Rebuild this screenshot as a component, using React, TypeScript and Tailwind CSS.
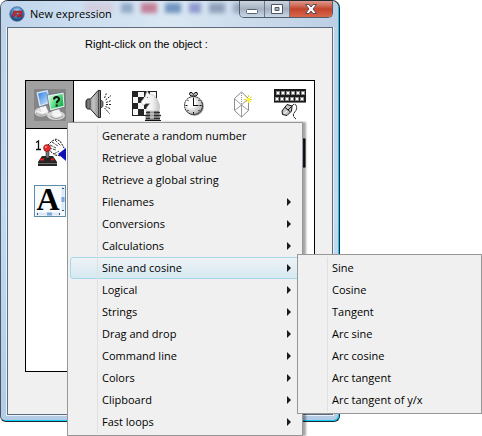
import type { ReactNode } from 'react';
import clsx from 'clsx';

interface MenuEntry {
  label: string;
  hasChildren?: boolean;
  children?: MenuEntry[];
}

const menu: MenuEntry[] = [
  { label: 'Generate a random number' },
  { label: 'Retrieve a global value' },
  { label: 'Retrieve a global string' },
  { label: 'Filenames', hasChildren: true },
  { label: 'Conversions', hasChildren: true },
  { label: 'Calculations', hasChildren: true },
  {
    label: 'Sine and cosine',
    hasChildren: true,
    children: [
      { label: 'Sine' },
      { label: 'Cosine' },
      { label: 'Tangent' },
      { label: 'Arc sine' },
      { label: 'Arc cosine' },
      { label: 'Arc tangent' },
      { label: 'Arc tangent of y/x' },
    ],
  },
  { label: 'Logical', hasChildren: true },
  { label: 'Strings', hasChildren: true },
  { label: 'Drag and drop', hasChildren: true },
  { label: 'Command line', hasChildren: true },
  { label: 'Colors', hasChildren: true },
  { label: 'Clipboard', hasChildren: true },
  { label: 'Fast loops', hasChildren: true },
];

function AppIcon() {
  return (
    <svg width="16" height="16" viewBox="0 0 16 16">
      <defs>
        <radialGradient id="ball" cx="0.5" cy="0.3" r="0.7">
          <stop offset="0" stopColor="#b9d6f0" />
          <stop offset="0.5" stopColor="#4a86c2" />
          <stop offset="1" stopColor="#123a6b" />
        </radialGradient>
      </defs>
      <circle cx="8" cy="8" r="7.3" fill="url(#ball)" stroke="#4b6f98" strokeWidth="0.7" />
      <path d="M3 11 4.6 5H9L8.5 6.7H6.2L6 7.7H8L7.5 9.2H5.5L5 11Z" fill="#d4262a" stroke="#5a1622" strokeWidth="0.4" />
      <path d="M9 5H13.4L13 8.3 10.8 9.3H13.2L12.6 11H8L8.5 8.8 11 7.2V6.5H9Z" fill="#d4262a" stroke="#5a1622" strokeWidth="0.4" />
    </svg>
  );
}

function SystemIcon() {
  return (
    <svg width="32" height="32" viewBox="0 0 32 32">
      <defs>
        <linearGradient id="blueScreen" x1="0" y1="0" x2="1" y2="1">
          <stop offset="0" stopColor="#2d7be0" />
          <stop offset="1" stopColor="#d6ecff" />
        </linearGradient>
        <linearGradient id="greenScreen" x1="0" y1="0" x2="1" y2="0.6">
          <stop offset="0" stopColor="#e4ffec" />
          <stop offset="0.5" stopColor="#67e38c" />
          <stop offset="1" stopColor="#18b14c" />
        </linearGradient>
      </defs>
      <rect width="32" height="32" fill="#858585" />
      <ellipse cx="7.5" cy="23" rx="7" ry="4.5" fill="#dadada" />
      <path d="M6 18 12 17 14 23 8 25Z" fill="#f4f4f4" />
      <path d="M2 3 14 0.5 17 14 5 18Z" fill="#dfe7ef" stroke="#586b80" strokeWidth="0.6" />
      <path d="M4 4.5 13 2.5 15.5 13 6.5 16Z" fill="url(#blueScreen)" />
      <ellipse cx="22" cy="26.5" rx="9" ry="4.5" fill="#d6d6d6" />
      <path d="M18 22 25 20 28 27 20 29Z" fill="#f2f2f2" />
      <path d="M13 6 30 3 31 18 16 22Z" fill="#e6eef0" stroke="#3d5260" strokeWidth="0.6" />
      <path d="M14.8 7.5 28.5 5 29.5 16.7 17 20Z" fill="url(#greenScreen)" />
      <path d="M20 10.5c0-3 5-3.5 5-.3 0 2-2.3 1.8-2.3 4" fill="none" stroke="#111" strokeWidth="2" />
      <rect x="21.7" y="15.5" width="2" height="2" fill="#111" />
      <path d="M2 24q5 4 10 1M16 27q6 5 13 0" fill="none" stroke="#9c9c9c" />
      <path d="M3 22q4 3 8 1M18 25q4 3 9 0" fill="none" stroke="#fff" />
    </svg>
  );
}

function SpeakerIcon() {
  return (
    <svg width="32" height="32" viewBox="0 0 32 32">
      <defs>
        <linearGradient id="cone" x1="0" x2="1">
          <stop offset="0" stopColor="#5a5a5a" />
          <stop offset="0.5" stopColor="#c4c4c4" />
          <stop offset="1" stopColor="#808080" />
        </linearGradient>
      </defs>
      <path d="M5.5 10H8.5L16 1.5H18.5V28.5H16L8.5 20H5.5L4 18V12Z" fill="url(#cone)" stroke="#222" />
      <path d="M16.5 2V28M8 10.5V19.5" stroke="#444" fill="none" />
      <path d="M18.5 11.5H20L21 13V17L20 18.5H18.5Z" fill="#777" stroke="#222" strokeWidth="0.7" />
      <path
        d="M22.5 9 24.5 4M23.5 11 29 6.5M24 13.5 29.5 11.5M24 15.5H30M23.5 17.5 29 20M22.5 19 27.5 24.5"
        stroke="#222"
        strokeDasharray="2 1"
      />
    </svg>
  );
}

const boardCells = Array.from({ length: 16 }, (_, n) => ({
  x: (n % 4) * 6,
  y: 2 + Math.floor(n / 4) * 6,
  dark: ((n % 4) + Math.floor(n / 4)) % 2 === 0,
}));

function StoryboardIcon() {
  return (
    <svg width="32" height="32" viewBox="0 0 32 32">
      <defs>
        <linearGradient id="horse" x1="0" x2="1">
          <stop offset="0" stopColor="#fff" />
          <stop offset="0.6" stopColor="#f2f2f2" />
          <stop offset="1" stopColor="#c4c4c4" />
        </linearGradient>
      </defs>
      <rect x="2.5" y="2.5" width="24" height="24" fill="#f6f6f6" stroke="#222" />
      <g transform="translate(2 0)">
        {boardCells.map(({ x, y, dark }) => (
          <rect key={`${x}-${y}`} x={x} y={y} width="6" height="6" fill={dark ? '#252525' : '#f6f6f6'} />
        ))}
      </g>
      <rect x="2.5" y="2.5" width="24" height="24" fill="none" stroke="#222" />
      <path
        d="M11 13 15 8 16 5 17 2 19 5Q24 5 27 10Q31 16 29 22H16Q16 18 20 14.5L16 14.5 13 16.5Z"
        fill="url(#horse)"
        stroke="#bdbdbd"
        strokeWidth="0.6"
      />
      <rect x="17" y="8" width="1" height="1" fill="#777" />
      <path d="M17 22H29L30 31H15Z" fill="#999" />
      <path d="M16 23.5H30M15 26.5H31M16 29.5H30" stroke="#2a2a2a" strokeWidth="1.6" />
      <path d="M20 22H24V30H20Z" fill="#e4e4e4" opacity="0.6" />
      <path d="M15 31.5H31" stroke="#111" />
    </svg>
  );
}

function TimerIcon() {
  return (
    <svg width="32" height="32" viewBox="0 0 32 32">
      <defs>
        <radialGradient id="dial" cx="0.35" cy="0.35" r="0.75">
          <stop offset="0.3" stopColor="#fff" />
          <stop offset="1" stopColor="#a2a2a2" />
        </radialGradient>
      </defs>
      <circle cx="16.5" cy="17.5" r="9.3" fill="#888" />
      <circle cx="15.5" cy="16.5" r="9" fill="url(#dial)" stroke="#222" strokeDasharray="2 0.5" />
      <path d="M13 7 11.5 5.5 12 3.5H14L15.5 5.5 17 3.5H19L19.5 5.5 18 7Z" fill="#bbb" stroke="#111" />
      <path d="M15.5 10V17M15.5 16.5H20.5" fill="none" stroke="#111" />
      <path d="M15.5 8.5V10M15.5 23V25M7.5 16.5H9.5M21.5 16.5H23.5M9.5 11 10.5 12M21.5 11 20.5 12M9.5 22 10.5 21M21.5 22 20.5 21" stroke="#111" />
    </svg>
  );
}

function CreateIcon() {
  return (
    <svg width="32" height="32" viewBox="0 0 32 32">
      <path d="M15.5 3 8.5 9.5V21.5L15.5 28 22.5 21.5V9.5Z" fill="#fff" stroke="#8c8c8c" />
      <path d="M8.5 9.5 15.5 16 22.5 9.5M15.5 16V28M8.5 21.5 15.5 16 22.5 21.5" fill="none" stroke="#9a9a9a" />
      <path d="M15.5 4V16" stroke="#999" strokeDasharray="1 1" />
      <path d="M22.5 6V15M18 10.5H27M19.5 7.5 25.5 13.5M25.5 7.5 19.5 13.5" stroke="#e3da18" strokeDasharray="2 1" />
      <rect x="21" y="9" width="3" height="3" fill="#fdf52e" />
    </svg>
  );
}

function KeyboardMouseIcon() {
  const keys = [2, 7, 12, 17, 22, 27];
  return (
    <svg width="32" height="32" viewBox="0 0 32 32">
      <rect width="32" height="14" fill="#1b1b1b" />
      <path d="M0 13.5H32" stroke="#777" />
      {keys.map((x) => (
        <g key={x} shapeRendering="crispEdges">
          <rect x={x} y="2" width="4" height="4" fill="#8d8d8d" />
          <rect x={x + 1} y="3" width="2" height="2" fill="#fff" />
          <rect x={x - 1} y="8" width="4" height="4" fill="#8d8d8d" />
          <rect x={x} y="9" width="2" height="2" fill="#fff" />
        </g>
      ))}
      <path d="M18 17Q20 14 22 16Q24 20 20 24Q18 27 22 30" fill="none" stroke="#222" strokeDasharray="3 0.5" />
      <path d="M8 22 13 15.5 18 17 17.5 22 13 26.5 8.5 25.5Z" fill="#c4c4c4" stroke="#111" />
      <path d="M11 18.5 16.5 23M14 21 17.5 17.5" stroke="#111" />
      <path d="M10 24.5 13 22" stroke="#fff" />
    </svg>
  );
}

function JoystickIcon() {
  return (
    <svg width="32" height="32" viewBox="0 0 32 32">
      <path d="M2 5.5 4.5 4V13M2 12.5H7" fill="none" stroke="#111" strokeWidth="1.3" />
      <path d="M4 25 8 19H19L23 25V29H4Z" fill="#262626" />
      <path d="M4 26.5H23" stroke="#6d6d6d" />
      <path d="M6 22.5H10M17 22.5H20" stroke="#e02020" strokeWidth="2" />
      <path d="M12 11H15V21H12Z" fill="#777" stroke="#111" strokeWidth="0.5" />
      <path d="M14 8 18 4 22 2 26 4 29 9 31 13 27 19 21 18 16 14Z" fill="#fff" stroke="#111" strokeDasharray="2 1" />
      <path d="M18 5 24 9M21 3 27 9M15 11 22 13M16 8 22 11M20 17 25 14" stroke="#444" strokeDasharray="3 1" />
      <circle cx="13" cy="11" r="3.5" fill="#e52a2a" stroke="#701010" strokeWidth="0.5" />
      <circle cx="12" cy="10" r="1" fill="#ff9c9c" />
      <path d="M32 11 24 17 32 24Z" fill="#1010b8" />
    </svg>
  );
}

function TextObjectIcon() {
  return (
    <span className="relative flex size-8 items-center justify-center border border-[#5d8ba8] bg-[#f7fbfd] font-['Liberation_Serif',serif] text-[32px] leading-8 font-bold">
      <svg className="absolute inset-0" width="30" height="30" viewBox="0 0 30 30">
        <path d="M28 1V25M1 28H25" stroke="#dbe8f6" strokeWidth="3" />
        <path d="M28 11V16M12 28H17" stroke="#7fa5dd" strokeWidth="3" />
        <path d="M27 3 28 2 29 3M27 24 28 25 29 24M3 27 2 28 3 29M24 27 25 28 24 29" fill="none" stroke="#36527e" />
      </svg>
      <span className="relative pr-1 pb-1">A</span>
    </span>
  );
}

function ScreenObjectIcon() {
  return (
    <svg width="32" height="32" viewBox="0 0 32 32">
      <rect x="1" y="2" width="30" height="28" fill="#1b2440" stroke="#000" />
    </svg>
  );
}

interface ObjectItem {
  name: string;
  icon: ReactNode;
}

const objects: (ObjectItem | null)[] = [
  { name: 'Special', icon: <SystemIcon /> },
  { name: 'Sound', icon: <SpeakerIcon /> },
  { name: 'Storyboard controls', icon: <StoryboardIcon /> },
  { name: 'Timer', icon: <TimerIcon /> },
  { name: 'Create new objects', icon: <CreateIcon /> },
  { name: 'Mouse and keyboard', icon: <KeyboardMouseIcon /> },
  { name: 'Player 1', icon: <JoystickIcon /> },
  null,
  null,
  null,
  null,
  { name: 'Screen', icon: <ScreenObjectIcon /> },
  { name: 'Text', icon: <TextObjectIcon /> },
];

function Menu({ items, className }: { items: MenuEntry[]; className?: string }) {
  return (
    <ul
      role="menu"
      className={clsx(
        'absolute border border-[#979797] bg-[#f0f0f0] p-0.5 font-["Open_Sans",sans-serif] text-[11px] text-black',
        className,
      )}
    >
      {items.map((item) => (
        <li key={item.label} role="none" className="relative">
          <button
            role="menuitem"
            className={clsx(
              'flex h-[22px] w-full items-center rounded-[3px] border pr-2',
              item.children
                ? 'border-[#a8d8eb] bg-linear-to-b from-[#edf3f6] to-[#d6e9f1]'
                : 'border-transparent',
            )}
          >
            <span className="mr-1 h-[22px] w-[27px] shrink-0 border-r border-[#e0e0e0]" />
            <span className="flex-1 text-left whitespace-nowrap">{item.label}</span>
            {item.hasChildren && (
              <svg width="4" height="8" viewBox="0 0 4 8" className="shrink-0">
                <path d="M0 0 4 4 0 8Z" fill="#1a1a1a" />
              </svg>
            )}
          </button>
          {item.children && (
            <Menu items={item.children} className="-top-[3px] left-[227px] z-20 w-[185px]" />
          )}
        </li>
      ))}
    </ul>
  );
}

function TitleBar() {
  return (
    <header className="relative flex h-[26px] items-start justify-between overflow-hidden rounded-t-md bg-linear-to-r from-[#bfd5ec] via-[#dae7f3] to-[#bccfe4] pl-2">
      {/* blurred desktop showing through the glass */}
      <div className="absolute inset-x-0 top-0.5 flex h-2.5 gap-2 pl-[84px] blur-[2px]">
        <span className="w-7 bg-[#d9a9b8]/30" />
        <span className="w-3 bg-[#54749c]/50" />
        <span className="w-4 bg-[#b5395a]/60" />
        <span className="w-4 bg-[#2c5f9c]/60" />
        <span className="w-3 bg-[#4a4fb0]/50" />
        <span className="w-4 bg-[#4e5f83]/50" />
        <span className="w-4 bg-[#4e5f83]/40" />
      </div>
      <h1 className="relative flex items-center gap-[5px] pt-1 font-['Open_Sans',sans-serif] text-[11px] leading-[18px]">
        <AppIcon />
        New expression
      </h1>
      <div className="relative mr-[5px] flex h-[17px] overflow-hidden rounded-b-[5px] border border-t-0 border-[#525d6b]">
        <button aria-label="Minimize" className="flex w-[25px] items-center justify-center border-r border-[#6d7787] bg-linear-to-b from-[#cbd5e1] via-[#a5b0bf] to-[#c9d8e8]">
          <svg width="12" height="12" viewBox="0 0 12 12">
            <rect x="0.5" y="6.5" width="11" height="4" rx="1" fill="#fff" stroke="#5a6373" />
          </svg>
        </button>
        <button aria-label="Maximize" className="flex w-[25px] items-center justify-center border-r border-[#6d7787] bg-linear-to-b from-[#cbd5e1] via-[#a5b0bf] to-[#c9d8e8]">
          <svg width="12" height="10" viewBox="0 0 12 10">
            <path d="M0.5 0.5H11.5V9.5H0.5ZM4 3.5V6.5H8V3.5Z" fill="#fff" stroke="#4f5869" fillRule="evenodd" />
          </svg>
        </button>
        <button aria-label="Close" className="flex w-[42px] items-center justify-center bg-linear-to-b from-[#dd9a8c] via-[#c3442c] to-[#d9664a]">
          <svg width="12" height="10" viewBox="0 0 12 10">
            <path d="M0.5 0.5H4L6 3 8 0.5H11.5L8 5 11.5 9.5H8L6 7 4 9.5H0.5L4 5Z" fill="#fff" stroke="#5b4a55" />
          </svg>
        </button>
      </div>
    </header>
  );
}

export default function App() {
  return (
    <main className="min-h-screen bg-white">
      <section className="w-full max-w-[340px] rounded-t-lg rounded-b-md border border-t-[#20262e] border-r-[#1b2a33] border-b-[#1b2a33] border-l-[#4a5664] bg-linear-to-b from-[#bdd0e6] via-[#c3daf3] to-[#b4cbe6] shadow-[inset_-1px_-1px_0_#08d0fa]">
        <div className="pr-px pb-px">
          <TitleBar />
          <div className="mr-[5px] mb-[5px] ml-1.5 border border-[#5d6b7c] bg-[#f0f0f0] px-[17px] pt-2 pb-[42px] outline outline-[#e6f1fb]">
            <p className="pl-[60px] font-['Liberation_Sans',sans-serif] text-[11px] leading-4">
              Right-click on the object :
            </p>
            <div className="relative mt-7 min-h-[292px] border border-black bg-white">
              <div className="grid auto-rows-[48px] grid-cols-6">
                {objects.map((item, i) =>
                  item ? (
                    <button
                      key={item.name}
                      aria-label={item.name}
                      className={clsx(
                        'flex items-center justify-center',
                        i === 0 && 'border-r border-b border-black bg-[#a0a0a0]',
                      )}
                    >
                      {item.icon}
                    </button>
                  ) : (
                    <span key={i} />
                  ),
                )}
              </div>
              <Menu
                items={menu}
                className="top-[41px] left-[41px] z-10 w-[236px] shadow-[3px_0_2px_rgba(0,0,0,0.35)]"
              />
            </div>
          </div>
        </div>
      </section>
    </main>
  );
}
